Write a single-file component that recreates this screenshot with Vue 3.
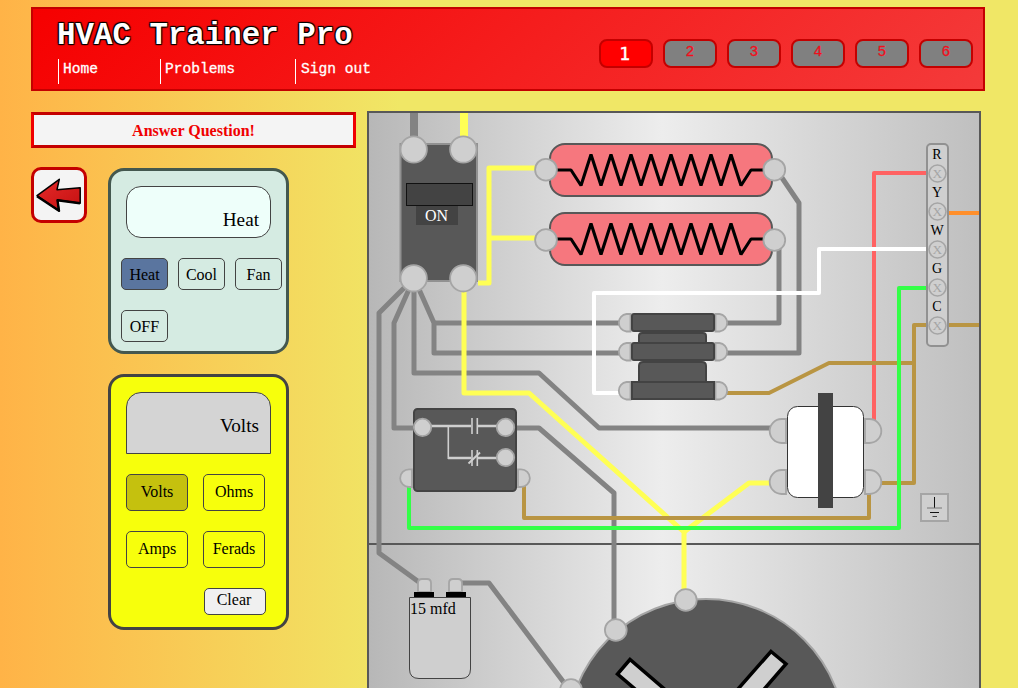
<script setup>
import { ref } from 'vue'

const pages = [1, 2, 3, 4, 5, 6]
const page = ref(1)
const links = ['Home', 'Problems', 'Sign out']
const modes = ['Heat', 'Cool', 'Fan', 'OFF']
const mode = ref('Heat')
const meters = ['Volts', 'Ohms', 'Amps', 'Ferads']
const meter = ref('Volts')

const greyWires = [
  'M414 113V150',
  'M414 278L379 313V553L423 585',
  'M414 278L394 323V428H414',
  'M414 278V373H539L599 428H772',
  'M414 278L434 323V353H620',
  'M434 323H620',
  'M514 428H539L614 493V625',
  'M460 583H489L568 688',
  'M774 166L799 203V353H727',
  'M779 245V323H727'
]
const yellowWires = [
  'M478 283H489V168H540',
  'M489 238H540',
  'M464 285V393H529L684 532V592',
  'M684 532L749 483H772'
]
const brownWires = [
  'M727 393H769L829 363H914',
  'M524 485V518H869V492',
  'M930 325H914V483H878',
  'M945 325H979'
]
const zigzag =
  'M557 0H571L581 15.500L591 -15.500L601 15.500L611 -15.500L621 15.500L631 -15.500L641 15.500L651 -15.500L661 15.500L671 -15.500L681 15.500L691 -15.500L701 15.500L711 -15.500L721 15.500L731 -15.500L741 15.500L751 0H764'
const heaters = [
  { top: 144, mid: 170, pin: 169.7 },
  { top: 213, mid: 239, pin: 240 }
]
const bars = [
  { y: 314, r: 2 },
  { y: 343, r: 2 },
  { y: 382, r: 0 }
]
const strip = ['R', 'Y', 'W', 'G', 'C']
</script>

<template>
  <div class="page">
    <header class="head">
      <div class="brand">
        <h1>HVAC Trainer Pro</h1>
        <nav>
          <a v-for="l in links" :key="l">{{ l }}</a>
        </nav>
      </div>
      <div class="pager">
        <button v-for="p in pages" :key="p" :class="{ on: p === page }" @click="page = p">{{ p }}</button>
      </div>
    </header>

    <main class="main">
      <section class="side">
        <button class="answer">Answer Question!</button>
        <div class="tools">
          <button class="back" aria-label="Back">
            <svg width="50" height="50" viewBox="34 170 50 50">
              <defs>
                <linearGradient id="arrow" x1="0" y1="0" x2="1" y2="1">
                  <stop offset="0" stop-color="#e52a2a" />
                  <stop offset="1" stop-color="#c41010" />
                </linearGradient>
              </defs>
              <path d="M37 195.700L59.300 179.300L57 189.700L80.200 187.800V203.200L57.500 200L59 210.800Z" fill="url(#arrow)" stroke="#000" stroke-width="1.500" stroke-linejoin="round" />
              <path d="M37 196.200L59 210.800L57.500 200.300L80 203.300" fill="none" stroke="#000" stroke-width="2.400" stroke-linejoin="round" />
            </svg>
          </button>
          <div class="devices">
            <div class="device thermo">
              <div class="screen">{{ mode }}</div>
              <div class="keys">
                <button v-for="m in modes" :key="m" :class="{ on: m === mode }" @click="mode = m">{{ m }}</button>
              </div>
            </div>
            <div class="device meter">
              <div class="screen">{{ meter }}</div>
              <div class="keys">
                <button v-for="m in meters" :key="m" :class="{ on: m === meter }" @click="meter = m">{{ m }}</button>
              </div>
              <button class="clear">Clear</button>
            </div>
          </div>
        </div>
      </section>

      <svg class="board" width="614" height="577" viewBox="367 111 614 577">
        <defs>
          <linearGradient id="steel" x1="0" y1="0" x2="1" y2="0">
            <stop offset="0" stop-color="#b7b7b7" />
            <stop offset="0.480" stop-color="#ededed" />
            <stop offset="1" stop-color="#bfbfbf" />
          </linearGradient>
        </defs>
        <rect x="368" y="112" width="612" height="432" fill="url(#steel)" stroke="#585858" stroke-width="2" />
        <rect x="368" y="544" width="612" height="400" fill="url(#steel)" stroke="#585858" stroke-width="2" />

        <g fill="none" stroke-linejoin="round">
          <path v-for="d in greyWires" :key="d" :d="d" stroke="#838383" stroke-width="5" />
          <path d="M414 113V150" stroke="#838383" stroke-width="8" />
          <path d="M464 113V150" stroke="#ffff55" stroke-width="8" />
          <path v-for="d in yellowWires" :key="d" :d="d" stroke="#ffff55" stroke-width="5" />
          <path d="M930 173H874V422" stroke="#ff6262" stroke-width="4" />
          <path v-for="d in brownWires" :key="d" :d="d" stroke="#b99543" stroke-width="4" />
          <path d="M945 213H979" stroke="#ff8f2b" stroke-width="4" />
          <path d="M930 249H819V293H594V393H620" stroke="#fff" stroke-width="4" />
          <path d="M930 288H899V528H409V485" stroke="#33ff47" stroke-width="4" />
        </g>

        <!-- breaker -->
        <rect x="400.500" y="144" width="76.500" height="137" fill="#585858" stroke="#919191" stroke-width="2" />
        <rect x="416" y="205" width="42" height="20" fill="#434343" />
        <rect x="406.500" y="183.500" width="66" height="22" fill="#434343" stroke="#111" />
        <text x="436.500" y="221" font-size="16" text-anchor="middle" fill="#fff">ON</text>
        <g class="pin">
          <circle cx="413.700" cy="149.500" r="13.200" />
          <circle cx="463.300" cy="149.500" r="13.200" />
          <circle cx="413.700" cy="278.300" r="13.200" />
          <circle cx="463.300" cy="278.300" r="13.200" />
        </g>

        <!-- heating elements -->
        <g v-for="h in heaters" :key="h.top">
          <rect x="550" :y="h.top" width="222" height="52" rx="15" fill="#f6777e" stroke="#585858" stroke-width="2" />
          <path :d="zigzag" :transform="`translate(0 ${h.mid})`" fill="none" stroke="#000" stroke-width="3.100" stroke-linejoin="bevel" />
          <g class="pin">
            <circle cx="546" :cy="h.pin" r="10.900" />
            <circle cx="774.300" :cy="h.pin" r="10.900" />
          </g>
        </g>

        <!-- sequencer -->
        <g fill="#585858" stroke="#434343" stroke-width="2">
          <path d="M639 345V336Q639 333 642 333H703Q706 333 706 336V345Z" />
          <path d="M639 385V366Q639 362 643 362H702Q706 362 706 366V385Z" />
          <g v-for="b in bars" :key="b.y">
            <path class="lug" :d="`M630.500 ${b.y}H626.500A8.600 8.800 0 0 0 626.500 ${b.y + 17.500}H630.500Z`" />
            <path class="lug" :d="`M715.500 ${b.y}H719.500A8.600 8.800 0 0 1 719.500 ${b.y + 17.500}H715.500Z`" />
            <rect x="632" :y="b.y" width="82" height="17" :rx="b.r" />
          </g>
        </g>

        <!-- relay -->
        <path class="lug" d="M412 469.300H409A8.800 8.800 0 0 0 409 487H412Z" />
        <path class="lug" d="M518 469.300H521A8.800 8.800 0 0 1 521 487H518Z" />
        <rect x="414" y="409" width="102" height="82" rx="3.500" fill="#585858" stroke="#434343" stroke-width="2" />
        <g fill="none" stroke="#cfcfcf">
          <path d="M430 426H471M477.500 426H498M448 458H471M477.500 458H498" stroke-width="2.300" />
          <path d="M448.300 427V459" stroke-width="1.600" />
          <path d="M472 418V434M477.300 418V434M472 450V466M477.300 450V466" stroke-width="1.600" />
          <path d="M468.500 463.500L480 452.500" stroke-width="2" />
        </g>
        <g class="pin">
          <circle cx="422.500" cy="427.400" r="8.700" />
          <circle cx="505.500" cy="427.400" r="8.700" />
          <circle cx="505.500" cy="457.500" r="8.700" />
        </g>

        <!-- transformer -->
        <g class="lug">
          <path d="M786 419H781.500A11.800 12 0 0 0 781.500 443H786Z" />
          <path d="M786 470H781.500A11.800 12 0 0 0 781.500 494H786Z" />
          <path d="M865 419H869.500A11.800 12 0 0 1 869.500 443H865Z" />
          <path d="M865 470H869.500A11.800 12 0 0 1 869.500 494H865Z" />
        </g>
        <rect x="787.500" y="406.500" width="76" height="91" rx="10" fill="#fff" stroke="#333" />
        <rect x="818" y="393" width="15" height="115" fill="#434343" />

        <!-- ground -->
        <rect x="921" y="494" width="27" height="27" fill="#cfcfcf" stroke="#a5a5a5" stroke-width="2" />
        <path d="M934.500 497V508M930 512.500H939" stroke="#111" />
        <path d="M927 508H942" stroke="#777" />
        <path d="M932.500 516.500H937" stroke="#444" />

        <!-- terminal strip -->
        <rect x="927" y="144" width="21" height="202" rx="4" fill="#cfcfcf" stroke="#919191" stroke-width="2" />
        <g v-for="(t, i) in strip" :key="t" :transform="`translate(0 ${i * 38})`" text-anchor="middle">
          <text x="937" y="159" font-size="14">{{ t }}</text>
          <circle cx="937.500" cy="173.500" r="8.500" fill="#cfcfcf" stroke="#a5a5a5" stroke-width="1.600" />
          <text x="937.300" y="178" font-size="13.300" fill="#a5a5a5">X</text>
        </g>

        <!-- capacitor -->
        <path class="lug" d="M418 592V583Q418 579 422 579H427Q431 579 431 583V592Z" />
        <path class="lug" d="M449 592V583Q449 579 453 579H458Q462 579 462 583V592Z" />
        <path d="M414 592H434V597H414ZM446 592H466V597H446Z" />
        <path d="M409.500 597.500H470.500V669Q470.500 678.500 461 678.500H419Q409.500 678.500 409.500 669Z" fill="#cfcfcf" stroke="#434343" />
        <text x="410" y="614" font-size="16">15 mfd</text>

        <!-- motor -->
        <circle cx="706" cy="738" r="139" fill="#585858" stroke="#a5a5a5" stroke-width="2" />
        <g fill="#cfcfcf" stroke="#000" stroke-width="3.500">
          <path d="M771 651.500L786 664L746 710L731 697Z" />
          <path d="M630 659.500L617.500 674L677 725L690 711Z" />
        </g>
        <g class="pin">
          <circle cx="685.800" cy="600" r="10.900" />
          <circle cx="615.800" cy="630" r="10.900" />
          <circle cx="571" cy="690" r="10.900" />
        </g>
      </svg>
    </main>
  </div>
</template>

<style>
body {
  margin: 0;
  overflow: hidden;
  background: #f0e766;
}
</style>

<style scoped>
.page {
  box-sizing: border-box;
  height: 688px;
  padding: 7px 33px 0 31px;
  overflow: hidden;
  background: linear-gradient(90deg, #ffb347 0, #f0e766 400px);
  font-family: "Liberation Serif", "Times New Roman", serif;
  color: #000;
}
button {
  box-sizing: border-box;
  margin: 0;
  padding: 0;
  font: inherit;
  color: inherit;
}
.head {
  box-sizing: border-box;
  display: flex;
  justify-content: space-between;
  height: 84px;
  padding: 0 10px 0 24px;
  border: 2px solid #c40000;
  background: linear-gradient(135deg, #f60000, #f43a3a);
  font-family: "Liberation Mono", "Courier New", monospace;
}
h1 {
  margin: 9px 0 0;
  font-size: 30.800px;
  line-height: 35px;
  font-weight: bold;
  color: #fff;
  white-space: nowrap;
  text-shadow: 1px 1px 1px #000, -1px -1px 1px #000, 1px -1px 1px #000, -1px 1px 1px #000;
}
nav {
  display: flex;
  margin: 6px 0 0 1px;
}
nav a {
  box-sizing: border-box;
  height: 25px;
  padding-left: 4px;
  border-left: 1px solid #fff;
  color: #fff;
  font-size: 14.600px;
  line-height: 21px;
  -webkit-text-stroke: 0.300px #fff;
}
nav a:nth-child(1) { width: 102px; }
nav a:nth-child(2) { width: 135px; }
nav a:nth-child(3) { padding-left: 5px; }
.pager {
  display: flex;
  gap: 10px;
  padding-top: 30px;
}
.pager button {
  width: 54px;
  height: 29px;
  padding-bottom: 3px;
  border: 2px solid #c40000;
  border-radius: 8px;
  background: #808080;
  color: #f00f1c;
  font-size: 14.600px;
  line-height: 20px;
  -webkit-text-stroke: 0.300px #f00f1c;
}
.pager .on {
  padding: 0 2px 0 0;
  background: #f00;
  color: #fff;
  font-family: "DejaVu Sans", sans-serif;
  font-size: 17px;
  -webkit-text-stroke: 0.500px #fff;
}
.main {
  display: flex;
  gap: 11px;
  margin-top: 20px;
}
.side {
  width: 325px;
}
.answer {
  display: block;
  width: 325px;
  height: 36px;
  margin-top: 1px;
  padding-top: 2px;
  border: 3px solid;
  border-color: #c40000 #f00000;
  background: #f4f4f4;
  color: #f00000;
  font-size: 16px;
  font-weight: bold;
  line-height: 18px;
}
.tools {
  display: flex;
  gap: 21px;
  margin-top: 19px;
}
.back {
  width: 56px;
  height: 56px;
  border: 3px solid #c40000;
  border-radius: 10px;
  background: #f4f4f4;
}
.back svg {
  display: block;
}
.devices {
  display: flex;
  flex-direction: column;
  gap: 20px;
  margin-top: 1px;
}
.device {
  box-sizing: border-box;
  width: 181px;
  padding: 15px 0 0 15px;
  border: 3px solid #434343;
  border-radius: 16px;
}
.screen {
  box-sizing: border-box;
  width: 145px;
  padding-right: 11px;
  border: 1px solid #434343;
  font-size: 19.200px;
  text-align: right;
}
.keys {
  display: flex;
  flex-wrap: wrap;
}
.device button {
  border: 1px solid #434343;
  border-radius: 5px;
  background: transparent;
  font-size: 16px;
  line-height: 18px;
}
.thermo {
  height: 186px;
  border-color: #44584f;
  background: #d5ebe2;
}
.thermo .screen {
  height: 52px;
  border-radius: 15px;
  background: #eefffa;
  line-height: 66px;
}
.thermo .keys {
  gap: 20px 10px;
  margin: 20px 0 0 -5px;
}
.thermo button {
  width: 47px;
  height: 32px;
  padding-top: 2px;
}
.device.thermo .on {
  background: #5a759f;
}
.meter {
  height: 256px;
  background: #f7ff0c;
}
.meter .screen {
  height: 62px;
  border-radius: 15px 15px 0 0;
  background: #d4d4d4;
  line-height: 66px;
}
.meter .keys {
  gap: 20px 15px;
  margin-top: 20px;
}
.meter .keys button {
  width: 62px;
  height: 37px;
  padding-bottom: 2px;
}
.device.meter .on {
  background: #c5c10e;
}
.device .clear {
  display: block;
  width: 62px;
  height: 27px;
  margin: 20px 0 0 78px;
  padding: 0 2px 3px 0;
  background: #f0f0f0;
}
.board {
  display: block;
  flex: none;
}
.pin,
.lug {
  fill: #cfcfcf;
  stroke: #a5a5a5;
  stroke-width: 1.800px;
}
</style>
